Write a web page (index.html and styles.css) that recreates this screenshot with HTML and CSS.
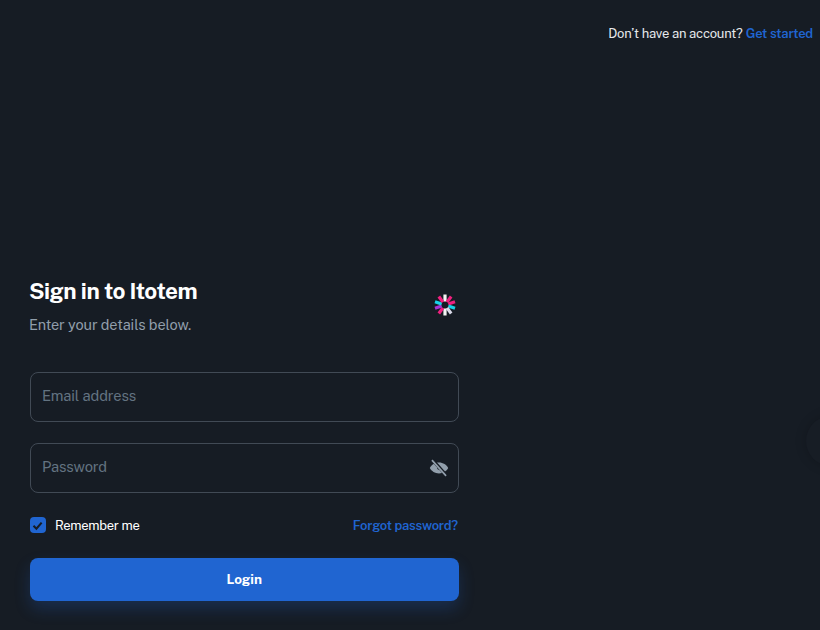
FILE: index.html
```html
<!DOCTYPE html>
<html lang="en">
<head>
<meta charset="utf-8">
<title>Sign in to Itotem</title>
<link rel="stylesheet" href="styles.css">
</head>
<body>
<div class="page">
  <header class="top">
    <span class="top-text">Don’t have an account?</span>
    <a class="link top-link" href="#">Get started</a>
  </header>
  <main class="panel">
    <div class="head">
      <div class="head-text">
        <h1 class="title">Sign in to Itotem</h1>
        <p class="sub">Enter your details below.</p>
      </div>
      <svg class="logo" width="22" height="22" viewBox="-11 -11 22 22" aria-hidden="true">
        <g stroke-width="3.200" fill="none">
          <path d="M0-10.500v7" stroke="#f5f5f5"/>
          <path d="M0 10.500v-7" stroke="#f5f5f5"/>
          <path d="M0-10.500v7" stroke="#f0207f" transform="rotate(36)"/>
          <path d="M0-10.500v7" stroke="#f0207f" transform="rotate(72)"/>
          <path d="M0-10.500v7" stroke="#19d3e8" transform="rotate(108)"/>
          <path d="M0-10.500v7" stroke="#d9d9e8" transform="rotate(144)"/>
          <path d="M0-10.500v7" stroke="#f0207f" transform="rotate(216)"/>
          <path d="M0-10.500v7" stroke="#a633d6" transform="rotate(252)"/>
          <path d="M0-10.500v7" stroke="#19d3e8" transform="rotate(288)"/>
          <path d="M0-10.500v7" stroke="#f0207f" transform="rotate(324)"/>
        </g>
      </svg>
    </div>
    <form class="form">
      <label class="field"><span class="ph">Email address</span></label>
      <label class="field"><span class="ph">Password</span>
        <svg class="eye" width="20" height="20" viewBox="0 0 24 24" aria-hidden="true"><path fill="#919eab" d="M12 5.500C7 5.500 3 8.200 1 12c2 3.800 6 6.500 11 6.500s9-2.700 11-6.500c-2-3.800-6-6.500-11-6.500z"/><circle cx="12" cy="12" r="2.200" fill="#161c24"/><path stroke="#161c24" stroke-width="4" d="M3 1l18 20"/><path stroke="#919eab" stroke-width="2" d="M3.500 2.500l17 19"/></svg>
      </label>
      <div class="row">
        <label class="check">
          <span class="box"><svg width="13" height="13" viewBox="0 0 12 12" aria-hidden="true"><path d="M2.300 6.200 5 8.900l4.800-5.600" fill="none" stroke="#161c24" stroke-width="1.900"/></svg></span>
          <span class="check-label">Remember me</span>
        </label>
        <a class="link forgot" href="#">Forgot password?</a>
      </div>
      <button class="btn" type="button">Login</button>
    </form>
  </main>
  <div class="fab-shadow"></div>
</div>
</body>
</html>
```
FILE: styles.css
```css
* { box-sizing: border-box; }
html, body { margin: 0; padding: 0; height: 100%; overflow: hidden; }
body {
  background: #161c24;
  font-family: "Public Sans", Roboto, sans-serif;
  color: #fff;
}
.page {
  position: relative;
  height: 630px;
  display: flex;
  flex-direction: column;
  justify-content: space-between;
}
.top {
  display: flex;
  justify-content: flex-end;
  gap: 3px;
  padding: 25px 7px 0 0;
  font-size: 13px;
  letter-spacing: -0.22px;
  line-height: 18px;
  font-weight: 400;
}
.top-text { color: #e6e9ec; }
.link { color: #2065d1; text-decoration: none; font-weight: 600; }
.panel {
  width: 429.500px;
  margin: 0 0 29.500px 29.500px;
}
.head {
  display: flex;
  align-items: center;
  justify-content: space-between;
  margin-bottom: 36px;
}
.head-text { margin-left: -0.500px; }
.title { margin: 0 0 7.500px; padding-top: 2px; font-size: 22.500px; letter-spacing: -0.45px; line-height: 30px; font-weight: 700; }
.sub { margin: 0; font-size: 14.500px; letter-spacing: -0.1px; line-height: 22px; color: #919eab; }
.logo { margin: 0 3.500px 0 0; }
.form { display: flex; flex-direction: column; }
.field {
  display: flex;
  align-items: center;
  justify-content: space-between;
  height: 50px;
  padding: 0 9px 2px 11.500px;
  border: 1px solid #414a55;
  border-radius: 8px;
  margin-bottom: 21px;
  font-size: 14.700px;
  letter-spacing: -0.15px;
  color: #637381;
}
.eye { display: block; margin-top: 2px; }
.row {
  display: flex;
  align-items: center;
  justify-content: space-between;
  margin: -0.500px 0 20.500px;
  height: 24px;
}
.check { display: flex; align-items: center; gap: 9px; font-size: 13px; letter-spacing: -0.3px; }
.box {
  width: 16.500px;
  height: 16.500px;
  border-radius: 4px;
  background: #2065d1;
  display: flex;
  align-items: center;
  justify-content: center;
}
.forgot { font-size: 13px; letter-spacing: -0.25px; margin-right: 1px; }
.btn {
  height: 43px;
  border: 0;
  border-radius: 8px;
  background: #2065d1;
  color: #fff;
  font: 700 13.500px "Public Sans", Roboto, sans-serif;
  box-shadow: 0 8px 16px rgba(32, 101, 209, 0.24);
}
.fab-shadow {
  position: absolute;
  left: 806px;
  top: 416px;
  width: 50px;
  height: 50px;
  border-radius: 50%;
  background: #171d25;
  box-shadow: 0 0 12px rgba(0, 0, 0, 0.2);
}
```
